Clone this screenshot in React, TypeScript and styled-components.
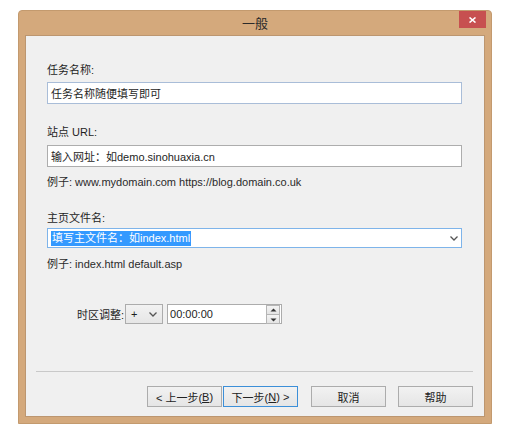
import React from "react";
import styled, { createGlobalStyle } from "styled-components";

const GlobalStyle = createGlobalStyle`
  html, body {
    margin: 0;
    padding: 0;
    background: #ffffff;
  }
  body {
    font-family: "Liberation Sans", "Noto Sans CJK SC", sans-serif;
    font-size: 11px;
    color: #1e1e1e;
  }
`;

const Page = styled.div`
  padding: 10px 0 0 18px;
`;

const Window = styled.div`
  width: 474px;
  height: 414px;
  box-sizing: border-box;
  background: #d4a97c;
  border: 1px solid #c39a6e;
  border-radius: 4px 4px 0 0;
  display: flex;
  flex-direction: column;
  padding: 0 6px 6px 6px;
`;

const TitleBar = styled.div`
  height: 24px;
  display: grid;
  grid-template-columns: 1fr auto 1fr;
  align-items: start;
`;

const Title = styled.div`
  grid-column: 2;
  font-family: "Noto Sans CJK SC", sans-serif;
  font-size: 13px;
  line-height: 24px;
  color: #2a2a2a;
`;

const CloseButton = styled.div`
  grid-column: 3;
  justify-self: end;
  width: 27px;
  height: 17px;
  background: #c75050;
  display: flex;
  align-items: center;
  justify-content: center;
  margin-right: -1px;
`;

const Content = styled.div`
  flex: 1;
  background: #f0f0f0;
  border: 1px solid #bc9670;
  display: flex;
  flex-direction: column;
`;

const Form = styled.div`
  display: flex;
  flex-direction: column;
  padding: 26px 22px 0 21px;
`;

const Label = styled.div<{ $mt?: number }>`
  margin-top: ${(p) => p.$mt ?? 0}px;
  height: 16px;
  line-height: 16px;
`;

const Hint = styled.div<{ $mt?: number }>`
  margin-top: ${(p) => p.$mt ?? 0}px;
  height: 16px;
  line-height: 16px;
  color: #2a2a2a;
`;

const TextBox = styled.div<{ $mt?: number; $border: string; $h?: number }>`
  margin-top: ${(p) => p.$mt ?? 0}px;
  height: ${(p) => p.$h ?? 22}px;
  box-sizing: border-box;
  background: #ffffff;
  border: 1px solid ${(p) => p.$border};
  display: flex;
  align-items: center;
  padding: 0 3px 0 3px;
`;

const Selected = styled.span`
  background: #3399ff;
  color: #ffffff;
  line-height: 15px;
  padding: 0 1px;
`;

const Grow = styled.div`
  flex: 1;
`;

const TimeRow = styled.div`
  margin-top: 32px;
  padding-left: 30px;
  display: flex;
  align-items: center;
`;

const TimeLabel = styled.span`
  margin-right: 1px;
`;

const SignSelect = styled.div`
  width: 38px;
  height: 20px;
  box-sizing: border-box;
  border: 1px solid #acacac;
  background: linear-gradient(#f2f2f2, #e6e6e6);
  display: flex;
  align-items: center;
  justify-content: space-between;
  padding: 0 5px 0 5px;
`;

const TimeBox = styled.div`
  margin-left: 4px;
  width: 115px;
  height: 20px;
  box-sizing: border-box;
  border: 1px solid #acacac;
  background: #ffffff;
  display: flex;
  align-items: center;
  padding-left: 2px;
`;

const Spinner = styled.div`
  width: 14px;
  height: 18px;
  display: flex;
  flex-direction: column;
  margin-right: 1px;
`;

const SpinHalf = styled.div`
  flex: 1;
  border: 1px solid #b5b5b5;
  background: linear-gradient(#f4f4f4, #e4e4e4);
  display: flex;
  align-items: center;
  justify-content: center;
  margin-bottom: -1px;
`;

const Footer = styled.div`
  margin-top: auto;
  padding: 0 11px 9px 10px;
  display: flex;
  flex-direction: column;
`;

const Separator = styled.div`
  height: 1px;
  background: #c9c9c9;
  margin-bottom: 14px;
`;

const ButtonRow = styled.div`
  display: flex;
  justify-content: flex-end;
`;

const Button = styled.div<{ $default?: boolean; $ml?: number }>`
  width: 75px;
  height: 21px;
  box-sizing: border-box;
  margin-left: ${(p) => p.$ml ?? 0}px;
  border: 1px solid ${(p) => (p.$default ? "#3c8fd8" : "#acacac")};
  background: linear-gradient(#f2f2f2, #e5e5e5);
  display: flex;
  align-items: center;
  justify-content: center;
  color: #222;
`;

const Key = styled.span`
  text-decoration: underline;
`;

const Chevron = () => (
  <svg width="8" height="5" viewBox="0 0 8 5">
    <path d="M0.5 0.5 L4 4 L7.5 0.5" fill="none" stroke="#555" strokeWidth="1.3" />
  </svg>
);

const Triangle = ({ up }: { up?: boolean }) => (
  <svg width="7" height="5" viewBox="0 0 7 5">
    {up ? (
      <path d="M3.5 0.5 L6.5 3.5 L0.5 3.5 Z" fill="#333" />
    ) : (
      <path d="M0.5 1.5 L6.5 1.5 L3.5 4.5 Z" fill="#333" />
    )}
  </svg>
);

export default function App() {
  return (
    <Page>
      <GlobalStyle />
      <Window>
        <TitleBar>
          <Title>一般</Title>
          <CloseButton>
            <svg width="7" height="6" viewBox="0 0 7 6">
              <path d="M0.5 0.5 L6.5 5.5 M6.5 0.5 L0.5 5.5" stroke="#fff" strokeWidth="1.6" />
            </svg>
          </CloseButton>
        </TitleBar>
        <Content>
          <Form>
            <Label>任务名称:</Label>
            <TextBox $mt={4} $border="#a9bdd8">任务名称随便填写即可</TextBox>
            <Label $mt={20}>站点 URL:</Label>
            <TextBox $mt={5} $border="#adadad">输入网址：如demo.sinohuaxia.cn</TextBox>
            <Hint $mt={7}>例子: www.mydomain.com https://blog.domain.co.uk</Hint>
            <Label $mt={20}>主页文件名:</Label>
            <TextBox $mt={2} $h={20} $border="#7eb4ea">
              <Selected>填写主文件名：如index.html</Selected>
              <Grow />
              <Chevron />
            </TextBox>
            <Hint $mt={8}>例子: index.html default.asp</Hint>
            <TimeRow>
              <TimeLabel>时区调整:</TimeLabel>
              <SignSelect>
                <span>+</span>
                <Chevron />
              </SignSelect>
              <TimeBox>
                00:00:00
                <Grow />
                <Spinner>
                  <SpinHalf>
                    <Triangle up />
                  </SpinHalf>
                  <SpinHalf>
                    <Triangle />
                  </SpinHalf>
                </Spinner>
              </TimeBox>
            </TimeRow>
          </Form>
          <Footer>
            <Separator />
            <ButtonRow>
              <Button>
                &lt; 上一步(<Key>B</Key>)
              </Button>
              <Button $default $ml={1}>
                下一步(<Key>N</Key>) &gt;
              </Button>
              <Button $ml={13}>取消</Button>
              <Button $ml={12}>帮助</Button>
            </ButtonRow>
          </Footer>
        </Content>
      </Window>
    </Page>
  );
}
